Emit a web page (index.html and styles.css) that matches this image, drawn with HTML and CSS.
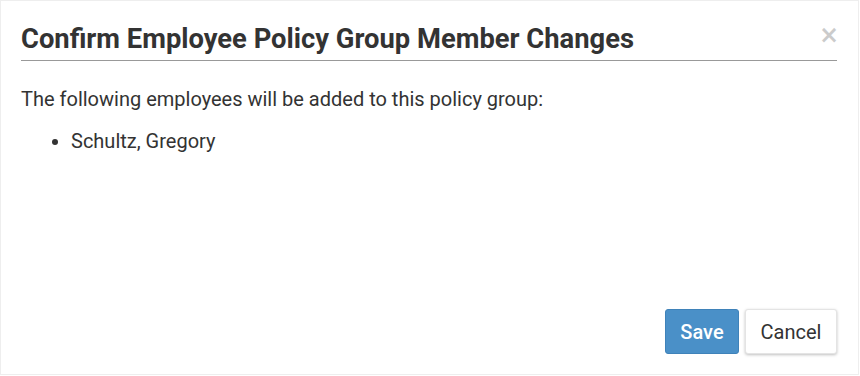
FILE: index.html
```html
<!DOCTYPE html>
<html>
<head>
<meta charset="utf-8">
<link rel="stylesheet" href="styles.css">
</head>
<body>
<div class="modal">
  <div class="modal-header">
    <h2 class="modal-title">Confirm Employee Policy Group Member Changes</h2>
    <button class="close" type="button">&times;</button>
  </div>
  <div class="modal-body">
    <p class="intro">The following employees will be added to this policy group:</p>
    <ul class="emp-list">
      <li>Schultz, Gregory</li>
    </ul>
  </div>
  <div class="modal-footer">
    <button class="btn btn-primary" type="button">Save</button>
    <button class="btn btn-default" type="button">Cancel</button>
  </div>
</div>
</body>
</html>
```
FILE: styles.css
```css
html, body {
  margin: 0;
  padding: 0;
  background: #fff;
}
body {
  font-family: Roboto, "Liberation Sans", sans-serif;
  color: #333;
}
.modal {
  box-sizing: border-box;
  width: 859px;
  height: 375px;
  border: 1px solid #eee;
  display: flex;
  flex-direction: column;
  padding: 0 21px 0 20px;
}
.modal-header {
  display: flex;
  align-items: flex-start;
  justify-content: space-between;
  border-bottom: 1px solid #999;
  padding-top: 22px;
  height: 37px;
}
.modal-title {
  margin: 0;
  font-size: 27.35px;
  font-weight: 700;
  line-height: 32px;
  color: #333;
}
.close {
  border: 0;
  background: none;
  padding: 0;
  margin: 2px -2px 0 0;
  font-family: "DejaVu Sans", sans-serif;
  font-size: 24px;
  font-weight: 700;
  line-height: 20px;
  color: #000;
  opacity: 0.2;
}
.modal-body {
  flex: 1;
  font-size: 20px;
}
.intro {
  margin: 24px 0 0;
  line-height: 28px;
}
.emp-list {
  margin: 14px 0 0;
  padding-left: 50px;
  line-height: 28px;
}
.modal-footer {
  display: flex;
  justify-content: flex-end;
  gap: 6px;
  padding-bottom: 20px;
}
.btn {
  font-family: Roboto, "Liberation Sans", sans-serif;
  font-size: 20px;
  height: 45px;
  border-radius: 3px;
  cursor: pointer;
}
.btn-primary {
  width: 74px;
  background: #4a90c8;
  border: 1px solid #3f82b9;
  color: #fff;
  font-weight: 500;
}
.btn-default {
  width: 92px;
  background: #fff;
  border: 1px solid #e4e4e4;
  color: #333;
  box-shadow: 0 1px 3px rgba(0, 0, 0, 0.25);
}
```
